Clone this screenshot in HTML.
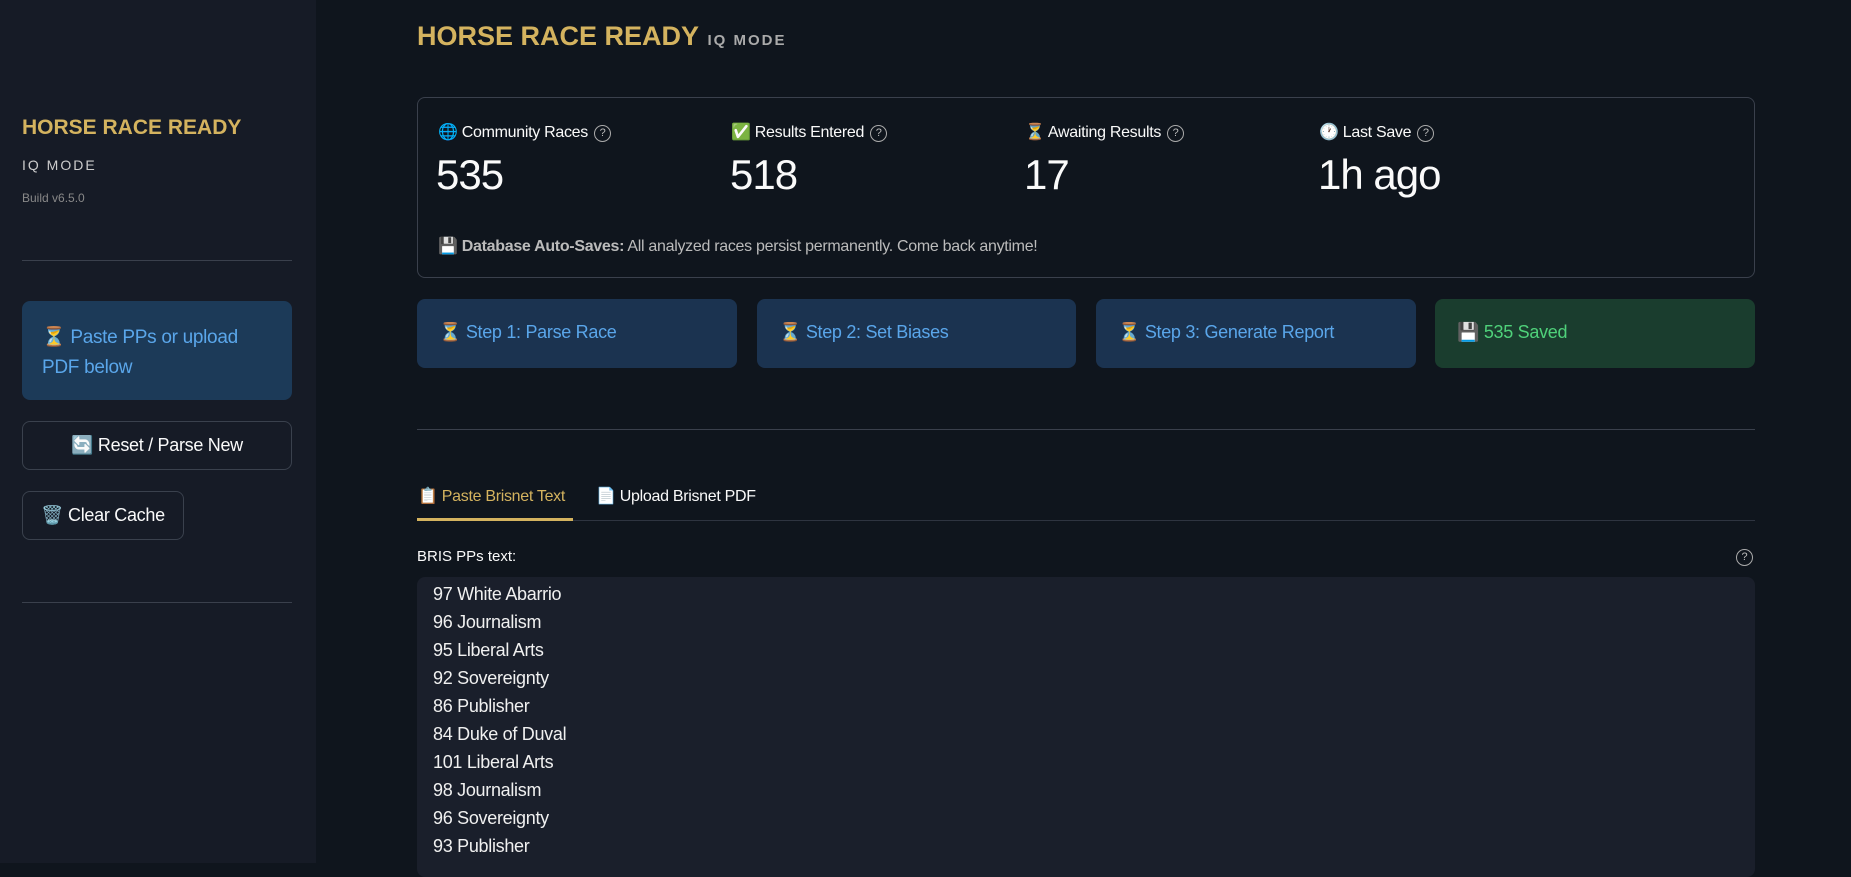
<!DOCTYPE html>
<html><head><meta charset="utf-8"><style>
*{box-sizing:border-box;margin:0;padding:0}
body{width:1851px;height:863px;overflow:hidden;background:#0f151d;font-family:"Liberation Sans",sans-serif;color:#fafafa;position:relative}
.sb{position:absolute;left:0;top:0;width:316px;height:863px;background:#161b26}
.a{position:absolute;white-space:nowrap}
.gold{color:#d4b35f;font-weight:bold;letter-spacing:0}
.hr{position:absolute;height:1px;background:#3a404c}
.box{position:absolute;border-radius:8px}
.q{display:inline-block;width:17px;height:17px;border:1.5px solid #aaa;border-radius:50%;font-size:11px;text-align:center;line-height:14px;color:#bbb;margin-left:6px;vertical-align:1px}
.step{position:absolute;top:299px;height:69px;background:#1b3350;border-radius:8px;color:#5aa6ea;font-size:18px;padding:23px 0 0 22px;letter-spacing:-0.3px}
.ln{position:absolute;left:433px;font-size:18px;color:#f0f0f0;letter-spacing:-0.3px}
</style></head><body>
<div class="sb"></div>
<div class="a gold" style="left:22px;top:116px;font-size:21px">HORSE RACE READY</div>
<div class="a" style="left:22px;top:157px;font-size:14px;letter-spacing:2px;color:#ccc">IQ MODE</div>
<div class="a" style="left:22px;top:191px;font-size:12px;color:#888">Build v6.5.0</div>
<div class="hr" style="left:22px;top:260px;width:270px"></div>
<div class="box" style="left:22px;top:301px;width:270px;height:99px;background:#1c3a58;color:#5aa6ea;font-size:19px;padding:22px 20px;line-height:30px;letter-spacing:-0.3px">⏳ Paste PPs or upload PDF below</div>
<div class="box" style="left:22px;top:421px;width:270px;height:49px;border:1px solid #3a414d;font-size:18px;text-align:center;line-height:47px;letter-spacing:-0.3px">🔄 Reset / Parse New</div>
<div class="box" style="left:22px;top:491px;width:162px;height:49px;border:1px solid #3a414d;font-size:18px;text-align:center;line-height:47px;letter-spacing:-0.3px">🗑️ Clear Cache</div>
<div class="hr" style="left:22px;top:602px;width:270px"></div>

<div class="a" style="left:417px;top:21px"><span class="gold" style="font-size:27px">HORSE RACE READY</span> <span style="font-size:15px;letter-spacing:2px;color:#aaa;font-weight:bold;margin-left:4px">IQ MODE</span></div>

<div class="box" style="left:417px;top:97px;width:1338px;height:181px;border:1px solid #3a404c"></div>
<div class="a" style="left:438px;top:122px;font-size:16px;letter-spacing:-0.3px">🌐 Community Races<span class="q">?</span></div>
<div class="a" style="left:731px;top:122px;font-size:16px;letter-spacing:-0.3px">✅ Results Entered<span class="q">?</span></div>
<div class="a" style="left:1025px;top:122px;font-size:16px;letter-spacing:-0.3px">⏳ Awaiting Results<span class="q">?</span></div>
<div class="a" style="left:1319px;top:122px;font-size:16px;letter-spacing:-0.3px">🕐 Last Save<span class="q">?</span></div>
<div class="a" style="left:436px;top:151px;font-size:42px;letter-spacing:-1px">535</div>
<div class="a" style="left:730px;top:151px;font-size:42px;letter-spacing:-1px">518</div>
<div class="a" style="left:1024px;top:151px;font-size:42px;letter-spacing:-1px">17</div>
<div class="a" style="left:1318px;top:151px;font-size:42px;letter-spacing:-1px">1h ago</div>
<div class="a" style="left:438px;top:236px;font-size:16px;color:#bbb;letter-spacing:-0.3px">💾 <b>Database Auto-Saves:</b> All analyzed races persist permanently. Come back anytime!</div>

<div class="step" style="left:417px;width:320px">⏳ Step 1: Parse Race</div>
<div class="step" style="left:757px;width:319px">⏳ Step 2: Set Biases</div>
<div class="step" style="left:1096px;width:320px">⏳ Step 3: Generate Report</div>
<div class="step" style="left:1435px;width:320px;background:#1a3d2e;color:#4fd17a">💾 535 Saved</div>

<div class="hr" style="left:417px;top:429px;width:1338px"></div>
<div class="a" style="left:418px;top:486px;font-size:16px;color:#d4b35f;letter-spacing:-0.3px">📋 Paste Brisnet Text</div>
<div class="a" style="left:596px;top:486px;font-size:16px;letter-spacing:-0.3px">📄 Upload Brisnet PDF</div>
<div class="hr" style="left:417px;top:520px;width:1338px;background:#2e3440"></div>
<div class="a" style="left:417px;top:518px;width:156px;height:3px;background:#d4b35f"></div>
<div class="a" style="left:417px;top:548px;font-size:15px">BRIS PPs text:</div>
<div class="a" style="left:1736px;top:548px"><span class="q" style="margin:0">?</span></div>
<div class="box" style="left:417px;top:577px;width:1338px;height:300px;background:#1a1f2b"></div>
<div class="ln" style="top:584px">97 White Abarrio</div>
<div class="ln" style="top:612px">96 Journalism</div>
<div class="ln" style="top:640px">95 Liberal Arts</div>
<div class="ln" style="top:668px">92 Sovereignty</div>
<div class="ln" style="top:696px">86 Publisher</div>
<div class="ln" style="top:724px">84 Duke of Duval</div>
<div class="ln" style="top:752px">101 Liberal Arts</div>
<div class="ln" style="top:780px">98 Journalism</div>
<div class="ln" style="top:808px">96 Sovereignty</div>
<div class="ln" style="top:836px">93 Publisher</div>
</body></html>
